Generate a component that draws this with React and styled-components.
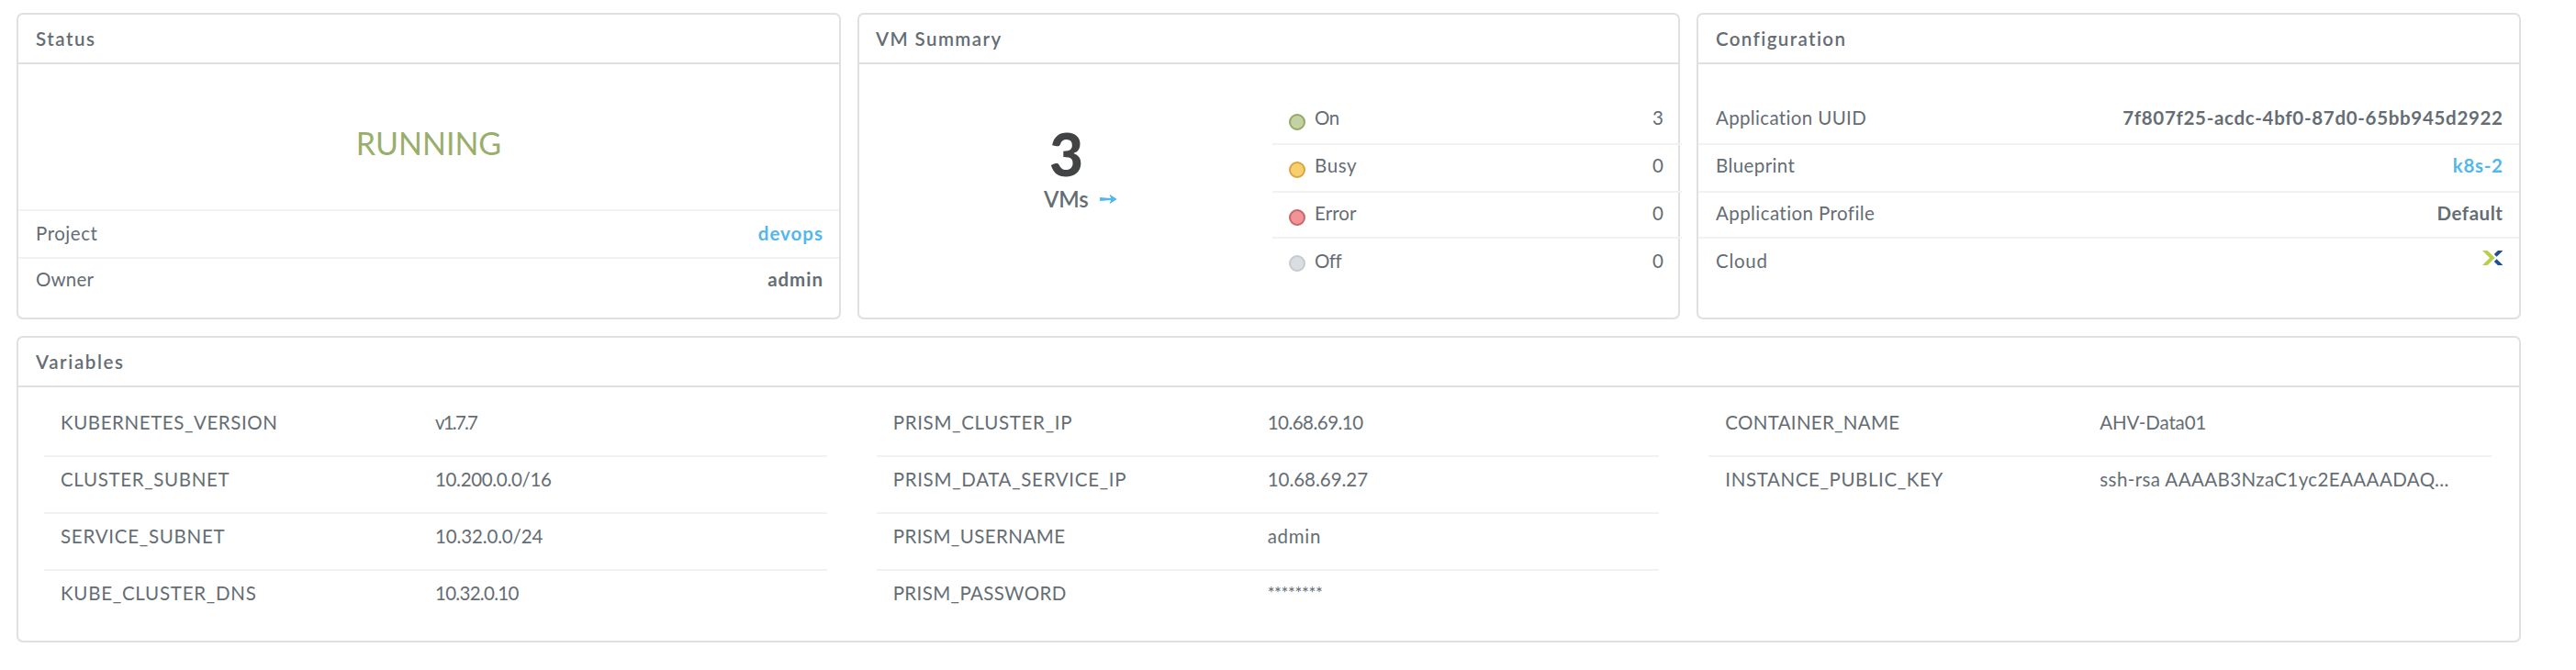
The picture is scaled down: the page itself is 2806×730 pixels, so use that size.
import React from "react";
import styled, { createGlobalStyle } from "styled-components";

const GlobalStyle = createGlobalStyle`
  *, *::before, *::after { box-sizing: border-box; }
  body {
    margin: 0;
    background: #fff;
    color: #656d74;
    font-family: Lato, "Open Sans", sans-serif;
    font-size: 20.5px;
    line-height: 24px;
    font-kerning: normal;
  }
`;

const Page = styled.main`
  width: 2806px;
  height: 730px;
  padding: 14px 60px 30px 18px;
  display: flex;
  flex-direction: column;
  gap: 18px;
`;

const CardRow = styled.div`
  display: grid;
  grid-template-columns: 898px 896px 898px;
  gap: 18px;
`;

const Card = styled.section`
  height: 334px;
  border: 2px solid #e0e0e0;
  border-radius: 7px;
  background: #fff;
  display: flex;
  flex-direction: column;
`;

const CardTitle = styled.h2`
  margin: 0;
  height: 54px;
  flex: none;
  padding-left: ${(p) => p.$inset ?? 19}px;
  border-bottom: 2px solid #e0e0e0;
  font-size: 20.5px;
  font-weight: 600;
  line-height: 52px;
  letter-spacing: ${(p) => p.$track}px;
`;

const Text = styled.span`
  white-space: nowrap;
  letter-spacing: ${(p) => p.$track ?? 0}px;
`;

const Value = styled(Text)`
  font-weight: 700;
  margin-right: ${(p) => -(p.$track ?? 0)}px;
`;

const Link = styled(Value).attrs({ as: "a" })`
  color: #52b7ec;
`;

const StateBanner = styled.div`
  height: 158px;
  display: flex;
  align-items: center;
  justify-content: center;
  padding-top: 14px;
  color: #9aae6c;
  font-size: 34px;
  line-height: 40px;
`;

const DetailRow = styled.div`
  display: flex;
  justify-content: space-between;
  height: ${(p) => p.$height ?? 52}px;
  padding: ${(p) => p.$top ?? 10}px 18px 0 19px;
  border-top: ${(p) => (p.$ruleTop ? "2px solid #f2f2f2" : "0")};
  border-bottom: ${(p) => (p.$rule ? "2px solid #f2f2f2" : "0")};
`;

const DetailList = styled.div`
  padding-top: 36px;
`;

const SummaryBody = styled.div`
  flex: 1;
  display: grid;
  grid-template-columns: 450px 444px;
`;

const Total = styled.div`
  display: flex;
  flex-direction: column;
  padding: 62px 0 0 201px;
`;

const TotalCount = styled.div`
  padding-left: 6px;
  font-size: 64px;
  font-weight: 900;
  line-height: 71px;
  color: #424345;
`;

const TotalLabel = styled.div`
  display: flex;
  align-items: center;
  gap: 12px;
  font-size: 24px;
  font-weight: 600;
  line-height: 28px;
`;

const StateList = styled.div`
  padding-top: 36px;
  margin-right: -2px;
`;

const StateRow = styled.div`
  display: flex;
  align-items: flex-start;
  height: ${(p) => p.$height}px;
  padding: ${(p) => p.$top}px 18px 0 18px;
  border-bottom: ${(p) => (p.$rule ? "2px solid #f2f2f2" : "0")};
`;

const Dot = styled.span`
  width: 18px;
  height: 18px;
  margin: ${(p) => 18 - p.$top}px 10px 0 0;
  border: 2px solid ${(p) => p.$edge};
  border-radius: 50%;
  background: ${(p) => p.$fill};
`;

const StateCount = styled.span`
  margin-left: auto;
  padding-right: 2px;
`;

const VariableGrid = styled.div`
  display: grid;
  grid-template-columns: repeat(3, 1fr);
  gap: 54px;
  padding: 14px 30px 0 28px;
`;

const VariableRow = styled.div`
  display: grid;
  grid-template-columns: 408px 1fr;
  height: 62px;
  padding: 12px 0 0 18px;
  border-bottom: 2px solid #f2f2f2;
  &:last-child { border-bottom: 0; }
`;

const Masked = styled(Text)`
  font-size: 18.5px;
`;

const ArrowIcon = () => (
  <svg width="19" height="12" viewBox="0 0 19 12" fill="#52b7ec" aria-hidden="true">
    <path d="M0 4L12 5.1L10.6 0.8L18.8 6L10.6 11.2L12 6.9L0 8Z" />
  </svg>
);

const LogoSvg = styled.svg`
  margin-top: 1px;
`;

const CloudLogo = () => (
  <LogoSvg width="22.4" height="16" viewBox="0 0 22.4 16" aria-label="Nutanix">
    <path d="M0 0H5.6L13.8 8L5.6 16H0L8 8Z" fill="#b8cf4d" />
    <path d="M22.4 0H16.9L12.8 4.1L15.6 6.7Z" fill="#1d4f9d" />
    <path d="M22.4 16H16.9L12.8 11.9L15.6 9.3Z" fill="#1d4f9d" />
  </LogoSvg>
);

const STATES = [
  { name: "On", track: -0.4, count: 3, edge: "#93a866", fill: "#c4d2a1", height: 52, top: 10 },
  { name: "Busy", track: 0.6, count: 0, edge: "#d9a441", fill: "#f7d06c", height: 52, top: 10 },
  { name: "Error", track: 0.1, count: 0, edge: "#c9646a", fill: "#f19497", height: 50, top: 10 },
  { name: "Off", track: -0.5, count: 0, edge: "#c5cad0", fill: "#d9dee2", height: 50, top: 12 },
];

const VARIABLES = [
  [
    ["KUBERNETES_VERSION", 0.58, "v1.7.7", -1.8],
    ["CLUSTER_SUBNET", 0.65, "10.200.0.0/16", -0.33],
    ["SERVICE_SUBNET", 0.74, "10.32.0.0/24", -0.14],
    ["KUBE_CLUSTER_DNS", 0.75, "10.32.0.10", -0.71],
  ],
  [
    ["PRISM_CLUSTER_IP", 0.68, "10.68.69.10", -0.52],
    ["PRISM_DATA_SERVICE_IP", 0.69, "10.68.69.27", -0.02],
    ["PRISM_USERNAME", 0.43, "admin", 0.71],
    ["PRISM_PASSWORD", 0.38, "********", -0.4],
  ],
  [
    ["CONTAINER_NAME", 0.3, "AHV-Data01", -0.12],
    ["INSTANCE_PUBLIC_KEY", 0.61, "ssh-rsa AAAAB3NzaC1yc2EAAAADAQ...", 0.4],
  ],
];

export default function App() {
  return (
    <Page>
      <GlobalStyle />
      <CardRow>
        <Card>
          <CardTitle $track={1.53}>Status</CardTitle>
          <StateBanner>
            <Text $track={0}>RUNNING</Text>
          </StateBanner>
          <DetailRow $ruleTop $rule $top={12} $height={54}>
            <Text $track={0.53}>Project</Text>
            <Link $track={0.99}>devops</Link>
          </DetailRow>
          <DetailRow>
            <Text $track={0.18}>Owner</Text>
            <Value $track={0.97}>admin</Value>
          </DetailRow>
        </Card>

        <Card>
          <CardTitle $track={1.4} $inset={18}>VM Summary</CardTitle>
          <SummaryBody>
            <Total>
              <TotalCount>3</TotalCount>
              <TotalLabel>
                <Text $track={-0.2}>VMs</Text>
                <ArrowIcon />
              </TotalLabel>
            </Total>
            <StateList>
              {STATES.map((s, i) => (
                <StateRow key={s.name} $height={s.height} $top={s.top} $rule={i < STATES.length - 1}>
                  <Dot $edge={s.edge} $fill={s.fill} $top={s.top} />
                  <Text $track={s.track}>{s.name}</Text>
                  <StateCount>{s.count}</StateCount>
                </StateRow>
              ))}
            </StateList>
          </SummaryBody>
        </Card>

        <Card>
          <CardTitle $track={1.38}>Configuration</CardTitle>
          <DetailList>
            <DetailRow $rule>
              <Text $track={0.35}>Application UUID</Text>
              <Value $track={0.68}>7f807f25-acdc-4bf0-87d0-65bb945d2922</Value>
            </DetailRow>
            <DetailRow $rule>
              <Text $track={0.4}>Blueprint</Text>
              <Link $track={0.7}>k8s-2</Link>
            </DetailRow>
            <DetailRow $rule $height={50}>
              <Text $track={0.42}>Application Profile</Text>
              <Value $track={0.55}>Default</Value>
            </DetailRow>
            <DetailRow $height={50} $top={12}>
              <Text $track={0.73}>Cloud</Text>
              <CloudLogo />
            </DetailRow>
          </DetailList>
        </Card>
      </CardRow>

      <Card>
        <CardTitle $track={1.6}>Variables</CardTitle>
        <VariableGrid>
          {VARIABLES.map((column, i) => (
            <div key={i}>
              {column.map(([name, nameTrack, value, valueTrack]) => {
                const Cell = value.startsWith("*") ? Masked : Text;
                return (
                  <VariableRow key={name}>
                    <Text $track={nameTrack}>{name}</Text>
                    <Cell $track={valueTrack}>{value}</Cell>
                  </VariableRow>
                );
              })}
            </div>
          ))}
        </VariableGrid>
      </Card>
    </Page>
  );
}
